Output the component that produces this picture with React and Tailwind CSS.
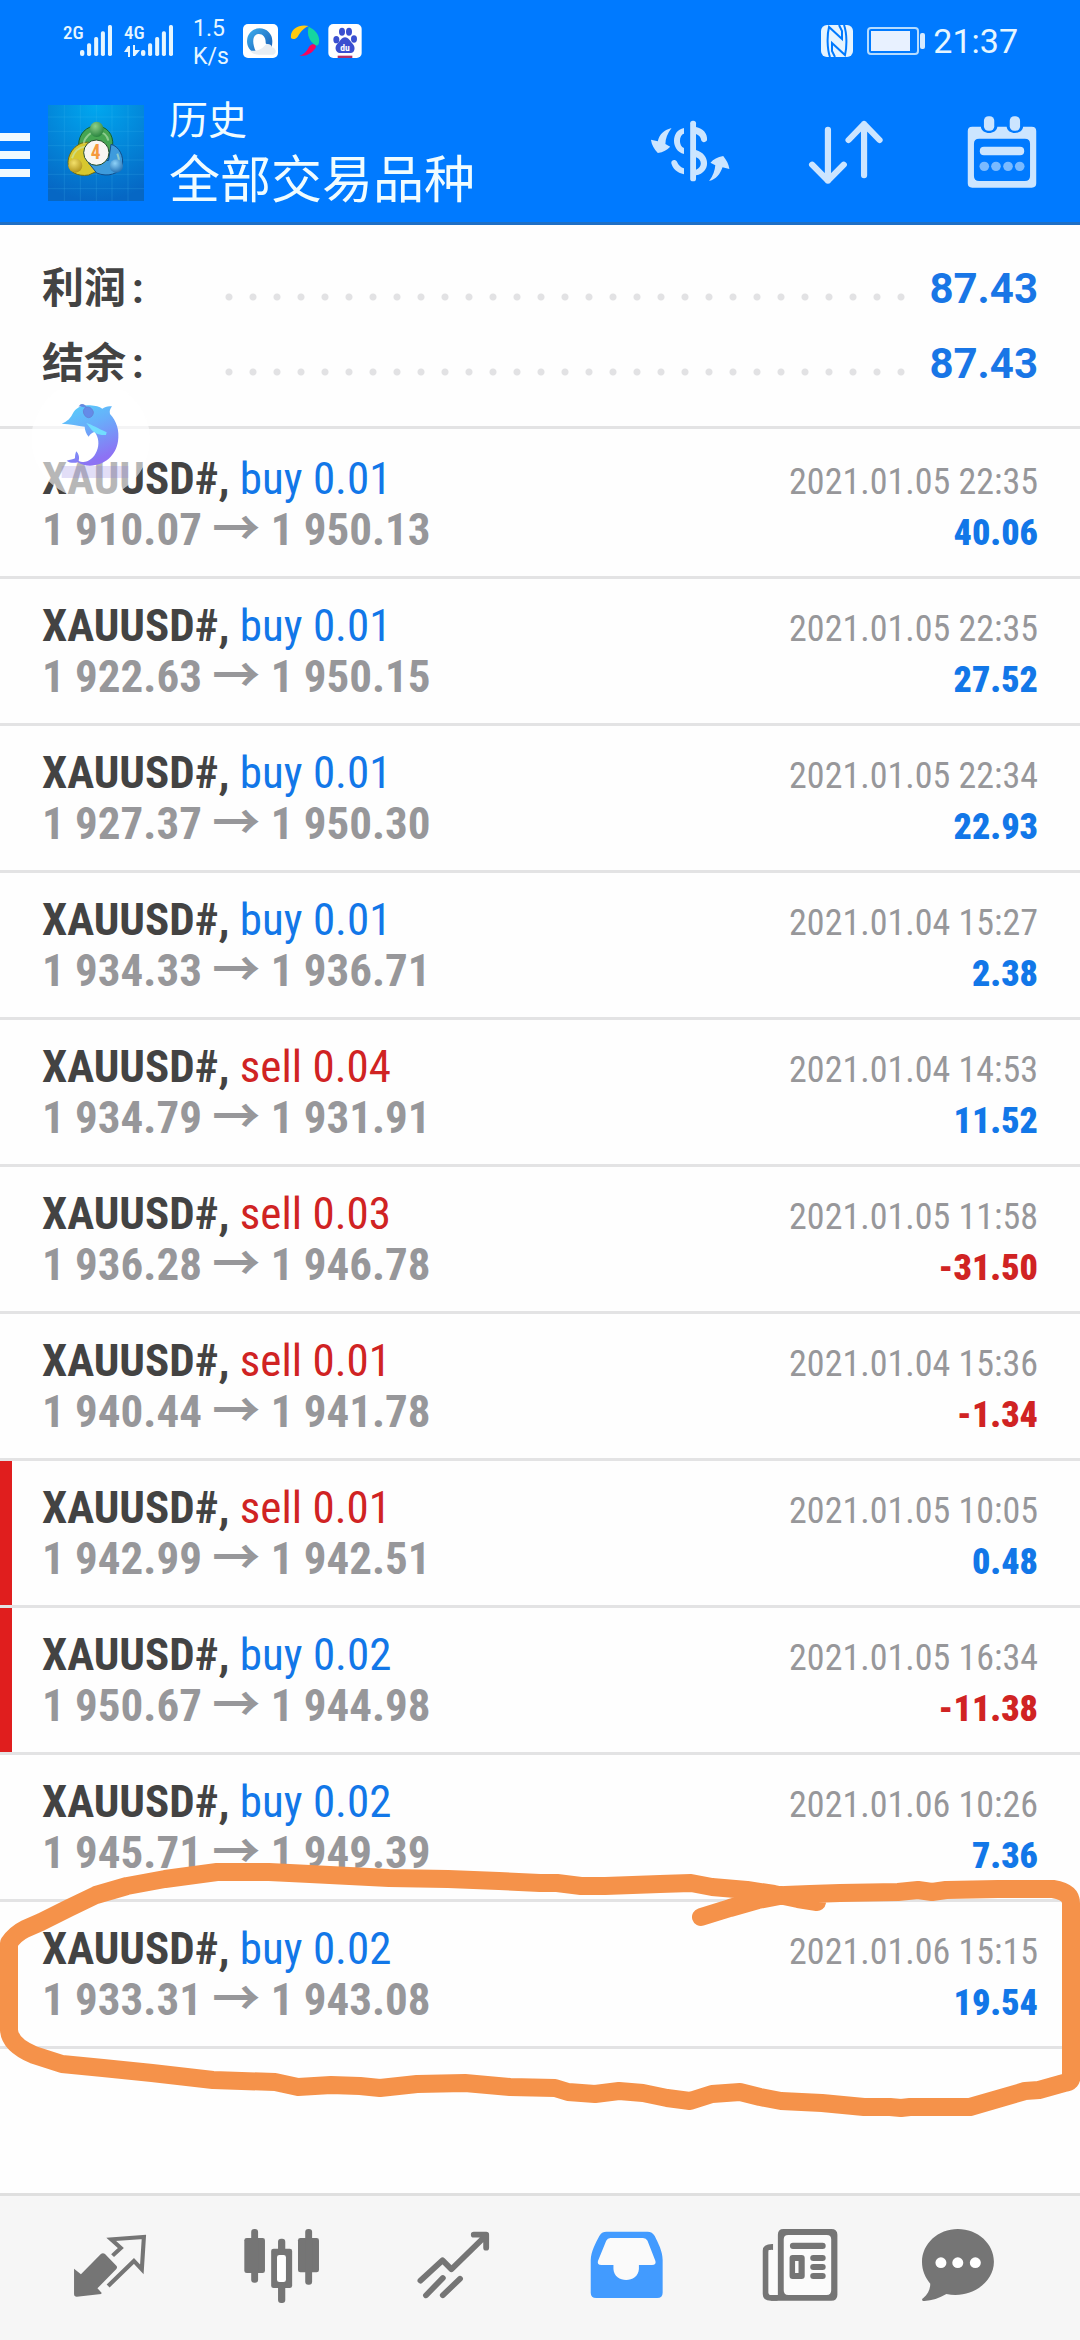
const trades = [
  ["buy", "0.01", "1 910.07", "1 950.13", "2021.01.05 22:35", "40.06"],
  ["buy", "0.01", "1 922.63", "1 950.15", "2021.01.05 22:35", "27.52"],
  ["buy", "0.01", "1 927.37", "1 950.30", "2021.01.05 22:34", "22.93"],
  ["buy", "0.01", "1 934.33", "1 936.71", "2021.01.04 15:27", "2.38"],
  ["sell", "0.04", "1 934.79", "1 931.91", "2021.01.04 14:53", "11.52"],
  ["sell", "0.03", "1 936.28", "1 946.78", "2021.01.05 11:58", "-31.50"],
  ["sell", "0.01", "1 940.44", "1 941.78", "2021.01.04 15:36", "-1.34"],
  ["sell", "0.01", "1 942.99", "1 942.51", "2021.01.05 10:05", "0.48", true],
  ["buy", "0.02", "1 950.67", "1 944.98", "2021.01.05 16:34", "-11.38", true],
  ["buy", "0.02", "1 945.71", "1 949.39", "2021.01.06 10:26", "7.36"],
  ["buy", "0.02", "1 933.31", "1 943.08", "2021.01.06 15:15", "19.54"],
];

function SignalBars() {
  return (
    <svg className="h-[31px] w-8" viewBox="231 73 95 93" preserveAspectRatio="none" fill="#e6f6ff">
      <rect x="231" y="148" width="13" height="18" rx="6" />
      <rect x="252" y="128" width="12" height="38" rx="5" />
      <rect x="273" y="109" width="12" height="57" rx="5" />
      <rect x="293" y="92" width="12" height="74" rx="5" />
      <rect x="314" y="73" width="12" height="93" rx="5" />
    </svg>
  );
}

function StatusBar() {
  return (
    <div className="flex h-[82px] items-center justify-between pl-[63px] pr-[62px] text-[#e6f6ff]">
      <div className="flex items-center">
        <div className="flex h-[32px] items-start">
          <span className="w-[17px] text-[19px] font-medium leading-4">2G</span>
          <SignalBars />
        </div>
        <div className="ml-3 flex h-[32px] items-start">
          <div className="w-[17px]">
            <span className="block text-[19px] font-medium leading-4">4G</span>
            <svg className="mt-1 h-3 w-4" viewBox="0 0 16 12" fill="#e6f6ff">
              <path d="M4 1h2v11H4V7H0zM9 0h2v5h5l-5 6H9z" />
            </svg>
          </div>
          <SignalBars />
        </div>
        <div className="ml-5 w-[34px] pt-1 font-[Roboto] text-[23px] leading-7">
          1.5
          <br />
          K/s
        </div>
        <svg className="ml-4 h-[34px] w-[35px]" viewBox="24 26 105 102">
          <defs>
            <linearGradient id="ring" x1="0" y1="0" x2="1" y2="1">
              <stop offset="0" stopColor="#3fb0ee" />
              <stop offset="1" stopColor="#1458b4" />
            </linearGradient>
          </defs>
          <rect x="24" y="26" width="105" height="102" rx="15" fill="#fff" />
          <path d="M66 116C45 109 36 94 36 77a38 38 0 0 1 76 0c0 9-1 15-4 21L92 84c1-19-9-29-22-28-17 2-22 25-4 60z" fill="url(#ring)" />
          <path d="M44 106c8 8 16 12 28 12h43c11-5 9-19-4-22-3-11-16-13-22-5-12 14-31 17-45 15z" fill="#e8edf2" />
        </svg>
        <svg className="ml-3 h-[34px] w-[30px]" viewBox="160 26 90 102">
          <path d="M163 68c-4-26 24-43 53-36-19 8-24 19-33 32-5 7-15 10-20 4z" fill="#ffca12" />
          <path d="M216 34c23 10 36 30 30 51-1 6-9 8-14 2-16-13-22-31-16-53z" fill="#15d6a0" />
          <path d="M188 121c17 3 38-6 49-24 3-7-4-12-13-9-10 3-11 27-36 33z" fill="#f5065c" />
        </svg>
        <svg className="ml-2 h-[34px] w-[34px]" viewBox="276 26 100 102">
          <rect x="276" y="26" width="100" height="102" rx="15" fill="#fff" />
          <g fill="#3a4fd0">
            <ellipse cx="300" cy="73" rx="9" ry="11" />
            <ellipse cx="317" cy="49" rx="9" ry="12" />
            <ellipse cx="338" cy="49" rx="9" ry="12" />
            <ellipse cx="353" cy="71" rx="9" ry="11" />
            <path d="M326 66c-11 0-15 12-24 21-9 10-3 26 8 26h33c13 0 15-18 7-26-8-9-13-21-24-21z" />
          </g>
          <text x="326" y="107" textAnchor="middle" fontSize="29" fontWeight="700" fill="#fff">du</text>
          <path d="M304 121h44v7h-44z" fill="#b0306a" />
        </svg>
      </div>
      <div className="flex items-center">
        <svg className="h-8 w-8" viewBox="0 0 32 32">
          <rect width="32" height="32" rx="6" fill="#e6f4ff" />
          <path d="M9 32C6 24 6 10 8 2L21 14V6L18 0M23 0C26 8 26 22 24 30L11 18V26L14 32" fill="none" stroke="#007aff" strokeWidth="2" />
        </svg>
        <svg className="ml-[14px] h-7 w-[58px]" viewBox="0 0 58 28">
          <rect x="1" y="1" width="50" height="26" rx="3" fill="none" stroke="#b5dcff" strokeWidth="2" />
          <rect x="4" y="4" width="39" height="20" fill="#e8f1ff" />
          <rect x="53" y="6" width="5" height="16" rx="2" fill="#d6ebff" />
        </svg>
        <span className="ml-2 font-[Roboto] text-[34px] leading-10">21:37</span>
      </div>
    </div>
  );
}

function AppLogo() {
  return (
    <svg className="ml-[18px] h-24 w-24" viewBox="24 30 288 288" role="img" aria-label="MetaTrader 4">
      <defs>
        <radialGradient id="sky" cx=".5" cy="0" r="1">
          <stop offset="0" stopColor="#00a8f0" />
          <stop offset="1" stopColor="#0667c4" />
        </radialGradient>
        <radialGradient id="green" cx=".4" cy=".3" r=".8">
          <stop offset="0" stopColor="#8fd08a" />
          <stop offset="1" stopColor="#1c7a35" />
        </radialGradient>
        <radialGradient id="gold" cx=".4" cy=".3" r=".8">
          <stop offset="0" stopColor="#f3e06a" />
          <stop offset="1" stopColor="#a98a10" />
        </radialGradient>
        <radialGradient id="azure" cx=".4" cy=".3" r=".8">
          <stop offset="0" stopColor="#8ed2f8" />
          <stop offset="1" stopColor="#1766ad" />
        </radialGradient>
      </defs>
      <rect x="24" y="30" width="288" height="288" fill="url(#sky)" />
      <path d="M73 30v288M121 30v288M169 30v288M216 30v288M264 30v288M24 66h288M24 109h288M24 152h288M24 195h288M24 238h288M24 281h288" stroke="#4cc3f5" strokeOpacity=".28" strokeWidth="2" />
      <path d="M116 150c0-34 24-57 53-57s53 23 49 61l-16 28-66-18z" fill="#46a552" stroke="#125f2e" strokeWidth="3" />
      <path d="M148 142c-32-4-62 24-64 60 0 28 28 44 62 38l22-10-18-40z" fill="#d8c72e" stroke="#6d6810" strokeWidth="3" />
      <path d="M213 148c23 5 41 37 33 64-8 24-42 36-76 22l-24-30 60-8z" fill="#3e9bdc" stroke="#114d8a" strokeWidth="3" />
      <path d="M131 146c3-20 20-36 41-36 18 0 30 12 33 27M96 190c5-18 19-33 39-35M232 176c8 19 5 37-6 49" fill="none" stroke="#c8ecc0" strokeOpacity=".55" strokeWidth="6" />
      <circle cx="169" cy="173" r="38" fill="#f8f6f2" stroke="#234d28" strokeWidth="3" />
      <ellipse cx="170" cy="103" rx="21" ry="23" fill="url(#green)" />
      <circle cx="106" cy="212" r="21" fill="url(#gold)" />
      <circle cx="229" cy="213" r="20" fill="url(#azure)" />
      <text x="167" y="192" textAnchor="middle" fontSize="58" fontWeight="700" fill="#f59a3c">4</text>
    </svg>
  );
}

function Header() {
  return (
    <header className="border-b-[3px] border-[#1f6fc4] bg-[#007aff]">
      <StatusBar />
      <div className="flex h-[140px] items-center pt-[2px]">
        <button aria-label="菜单" className="flex w-[30px] flex-col gap-[10px] pt-1">
          <span className="h-2 bg-[#effaff]" />
          <span className="h-2 bg-[#effaff]" />
          <span className="h-2 bg-[#effaff]" />
        </button>
        <AppLogo />
        <div className="ml-[25px] flex-1 pt-2 text-[#f0fcff]">
          <p className="text-[39px] leading-[48px]">历史</p>
          <h1 className="text-[51px] leading-[72px]">全部交易品种</h1>
        </div>
        <div className="flex gap-[60px] pr-[30px]">
          <button aria-label="货币">
            <svg className="h-[84px] w-24" viewBox="296 333 279 252" preserveAspectRatio="none" fill="#cce5ff">
              <rect x="436" y="362" width="17" height="182" rx="8" />
              <path d="M418 384v17c-15 3-16 38 0 43v18c-38-9-39-71 0-78zM453 381c20 4 34 20 32 39-3 8-15 9-17 0-1-9-7-15-15-18zM453 450c42 12 44 68 0 76v-17c19-6 18-31 0-37zM418 523c-20-5-33-17-37-34 1-11 13-11 17-3 4 10 11 16 20 19z" />
              <path d="M382 384c-12 16-18 32-18 48l14 8c-9 10-20 16-36 19-11-12-18-25-20-40l20 5c4-19 16-34 40-40zM491 543c12-16 17-32 18-47l-14-8c9-10 20-17 37-20 10 13 16 24 18 39l-20-5c-7 21-18 36-39 41z" />
            </svg>
          </button>
          <button aria-label="排序">
            <svg className="h-[84px] w-24" viewBox="749 333 279 252" preserveAspectRatio="none" fill="none" stroke="#cce5ff" strokeWidth="18" strokeLinecap="round" strokeLinejoin="round">
              <path d="M836 389v153M790 494l46 48 46-48M941 526V372M896 420l45-48 45 48" />
            </svg>
          </button>
          <button aria-label="日期">
            <svg className="h-[84px] w-24" viewBox="1202 333 279 252" preserveAspectRatio="none" fill="#cce5ff">
              <path fillRule="evenodd" d="M1255 380h25c3 25 45 25 48 0h27c3 25 45 25 48 0h25q13 0 13 13v157q0 13-13 13h-173q-13 0-13-13V393q0-13 13-13zM1275 416q-15 0-15 15v97q0 15 15 15h133q15 0 15-15v-97q0-15-15-15z" />
              <rect x="1289" y="349" width="30" height="43" rx="13" />
              <rect x="1364" y="349" width="30" height="43" rx="13" />
              <rect x="1277" y="440" width="129" height="26" rx="12" />
              <g opacity=".6">
                <circle cx="1290" cy="499" r="14" />
                <circle cx="1324" cy="499" r="14" />
                <circle cx="1359" cy="499" r="14" />
                <circle cx="1393" cy="499" r="14" />
              </g>
            </svg>
          </button>
        </div>
      </div>
    </header>
  );
}

function SummaryRow({ label, value }) {
  return (
    <div className="flex h-[75px] items-center font-[Roboto,'Noto_Sans_CJK_SC',sans-serif] text-[42px] font-bold">
      <dt className="flex w-[175px] gap-[6px] text-[#434343]">
        {label}
        <span>:</span>
      </dt>
      <span className="mt-4 h-6 flex-1 bg-[radial-gradient(circle,#e2e2e4_0_3px,transparent_4px)] bg-[length:24px_24px]" />
      <dd className="w-[124px] text-right text-[#1976e6]">{value}</dd>
    </div>
  );
}

function FloatingDolphin() {
  return (
    <svg className="pointer-events-none absolute -top-[39px] left-5 h-[120px] w-[150px]" viewBox="0 0 450 360" aria-hidden="true">
      <defs>
        <linearGradient id="body" x1="0" y1="0" x2=".4" y2="1">
          <stop offset="0" stopColor="#55d3fb" />
          <stop offset=".45" stopColor="#68aefa" />
          <stop offset="1" stopColor="#8d72f4" />
        </linearGradient>
      </defs>
      <circle cx="212" cy="148" r="178" fill="#fff" opacity=".62" />
      <path d="M125 228h200v36H125z" fill="#8c7be0" opacity=".25" />
      <path d="M125 101c18-8 27-17 33-30 10-19 28-28 52-25 17 1 28 4 37 10 8-6 17-9 29-7-6 8-8 14-6 23 20 21 29 50 24 82-6 42-40 73-84 73-15 0-26-3-36-10-13 3-25 2-34-5 10-3 19-4 25-7 0-9 1-15 4-21 8 9 10 19 7 28 17 12 44-2 54-28 9-21 6-42-6-59-9 4-14 7-18 15-8-9-11-19-12-30-21-3-43-8-69-9z" fill="url(#body)" />
      <path d="M199 99c17 5 35 16 61 28l-2 8c-20 2-37-5-47-20z" fill="#72ddff" />
      <path d="M178 49c4-9 16-7 23 5M190 62c5-16 25-14 30 4 0 9-5 16-14 17-9-1-16-9-16-21z" fill="#648be8" stroke="#6584d8" strokeWidth="3" />
    </svg>
  );
}

function MarkerLoop() {
  return (
    <svg className="pointer-events-none absolute -top-[42px] left-0 h-[260px] w-full" viewBox="0 1860 1080 260" preserveAspectRatio="none" aria-hidden="true">
      <path
        fill="none"
        stroke="#f5924a"
        strokeWidth="18"
        strokeLinecap="round"
        strokeLinejoin="round"
        d="M701 1917L730 1908 758 1900 785 1895 810 1894 840 1893 898 1892 918 1890 932 1892 946 1890 998 1889 1053 1889Q1071 1892 1071 1903V2075Q1073 2082 1064 2083L1039 2090 1025 2091 970 2107H910L901 2108 890 2107 864 2107 822 2103 781 2101 760 2097 740 2092 712 2094 690 2101 667 2098 643 2093 619 2091 595 2094 568 2092 555 2088 510 2087 465 2083 417 2084 380 2088 360 2086 331 2085 298 2087 275 2082 213 2080 152 2073 103 2068 62 2064 34 2055Q10 2045 9 2030V1943Q15 1934 25 1929L41 1922 69 1908 96 1895 127 1886 165 1879 217 1872H269L310 1874 389 1878 448 1879 499 1881 540 1883 557 1883 581 1886H605L660 1884 691 1883 712 1887 747 1890 774 1894 798 1899 817 1902"
      />
    </svg>
  );
}

function TradeRow({ trade, first, last }) {
  const [side, volume, open, close, time, profit, marked] = trade;
  return (
    <li
      className={`relative border-b-[3px] border-[#e3e3e4] px-[42px] pb-[21px] ${first ? "pt-6" : "pt-[21px]"} ${
        marked ? "shadow-[inset_12px_0_0_#e01e1e]" : ""
      }`}
    >
      <div className="flex h-[51px] items-baseline justify-between leading-[51px]">
        <p className="text-[45px]">
          <b className="text-[#434343]">XAUUSD#,</b>{" "}
          <span className={side === "buy" ? "text-[#1277e8]" : "text-[#d02323]"}>
            {side} {volume}
          </span>
        </p>
        <time className="text-[36px] leading-10 text-[#97979a]">{time}</time>
      </div>
      <div className="flex h-[51px] items-baseline justify-between font-bold leading-[51px]">
        <p className="text-[45px] text-[#97979a]">
          {open} <span className="text-[48px] leading-10">→</span> {close}
        </p>
        <b className={`text-[36px] leading-10 ${profit.startsWith("-") ? "text-[#d02323]" : "text-[#1277e8]"}`}>{profit}</b>
      </div>
      {first && <FloatingDolphin />}
      {last && <MarkerLoop />}
    </li>
  );
}

const tabs = [
  {
    name: "行情",
    box: "180 126 279 252",
    art: (
      <>
        <path d="M215 266l20 17 58-61q6-5 12 0l33 35q4 5 0 10l-55 58 12 13-1 4-71 8q-8 0-8-8z" />
        <path d="M327 227l24-23-28-26 95-7-6 97-23-25-75 75" fill="none" stroke="#757575" strokeWidth="12" />
      </>
    ),
  },
  {
    name: "图表",
    box: "679 126 279 252",
    art: (
      <>
        <rect x="709" y="174" width="60" height="105" rx="7" />
        <rect x="729" y="147" width="20" height="161" rx="9" />
        <rect x="865" y="174" width="61" height="103" rx="7" />
        <rect x="886" y="147" width="20" height="167" rx="9" />
        <rect x="787" y="206" width="61" height="118" rx="7" />
        <rect x="807" y="176" width="21" height="193" rx="9" />
        <rect x="804" y="225" width="26" height="81" rx="7" fill="#fff" />
      </>
    ),
  },
  {
    name: "交易",
    box: "1179 126 279 252",
    art: (
      <path d="M1221 302l64-61 26 27 99-100M1376 164h36v39M1237 346l49-52M1286 346l50-50" fill="none" stroke="#757575" strokeWidth="17" strokeLinecap="round" strokeLinejoin="round" />
    ),
  },
  {
    name: "历史",
    box: "110 126 279 252",
    active: true,
    art: (
      <>
        <path d="M147 240c1-26 14-50 25-72q6-13 21-13h119q14 0 21 13c10 21 23 46 23 72v98q0 16-16 16H163q-16 0-16-16z" fill="#429bff" />
        <path d="M204 174h95q9 0 13 8l23 61q3 12-10 12h-38v12c-2 44-72 44-74 0v-12h-35q-13 0-10-12l24-61q4-8 12-8z" fill="#fafafa" />
      </>
    ),
  },
  {
    name: "新闻",
    box: "610 126 279 252",
    art: (
      <>
        <path d="M677 192v18q-13-2-13 5v123q0 7 8 7h18v17h-20q-23 0-23-21V212q0-21 30-20z" />
        <path d="M664 210h26v135h-18q-8 0-8-8zM708 165h138v180H708z" fill="#fbfbfb" />
        <path fillRule="evenodd" d="M707 147h139q18 0 18 17v180q0 18-18 18H672l-8-17h27V164q0-17 16-17zm14 18q-13 0-13 13v153q0 14 13 14h112q13 0 13-14V178q0-13-13-13z" />
        <rect x="726" y="188" width="104" height="19" rx="9" />
        <path fillRule="evenodd" d="M734 225h26q9 0 9 9v54q0 9-9 9h-26q-9 0-9-9v-54q0-9 9-9zm7 18v36h10v-36z" />
        <rect x="785" y="225" width="45" height="18" rx="9" />
        <rect x="785" y="252" width="45" height="18" rx="9" />
        <rect x="785" y="279" width="45" height="18" rx="9" />
      </>
    ),
  },
  {
    name: "消息",
    box: "1109 126 279 252",
    art: (
      <>
        <path d="M1213 147c58 0 105 44 105 98 0 61-64 112-138 97-21 13-42 20-64 21-7 0-9-5-4-8 15-13 21-28 21-44-15-18-24-41-24-65 0-55 47-99 104-99z" />
        <circle cx="1164" cy="248" r="16" fill="#fff" />
        <circle cx="1213" cy="248" r="16" fill="#fff" />
        <circle cx="1264" cy="248" r="16" fill="#fff" />
      </>
    ),
  },
];

function TabBar() {
  return (
    <nav className="grid h-[147px] grid-cols-6 items-start border-t-[3px] border-[#dfdfdf] bg-[#f6f6f6] px-6 pt-[26px]">
      {tabs.map((tab) => (
        <button key={tab.name} aria-label={tab.name} aria-current={tab.active ? "page" : undefined} className="flex justify-center">
          <svg className="h-[84px] w-24" viewBox={tab.box} preserveAspectRatio="none" fill="#757575">
            {tab.art}
          </svg>
        </button>
      ))}
    </nav>
  );
}

export default function App() {
  return (
    <div className="flex min-h-screen flex-col bg-[#fefefe] font-['Roboto_Condensed','Noto_Sans_CJK_SC',sans-serif]">
      <Header />
      <main className="flex-1">
        <dl className="border-b-[3px] border-[#e3e3e4] px-[42px] pb-[25px] pt-[26px]">
          <SummaryRow label="利润" value="87.43" />
          <SummaryRow label="结余" value="87.43" />
        </dl>
        <ul>
          {trades.map((trade, i) => (
            <TradeRow key={i} trade={trade} first={i === 0} last={i === trades.length - 1} />
          ))}
        </ul>
      </main>
      <TabBar />
    </div>
  );
}
